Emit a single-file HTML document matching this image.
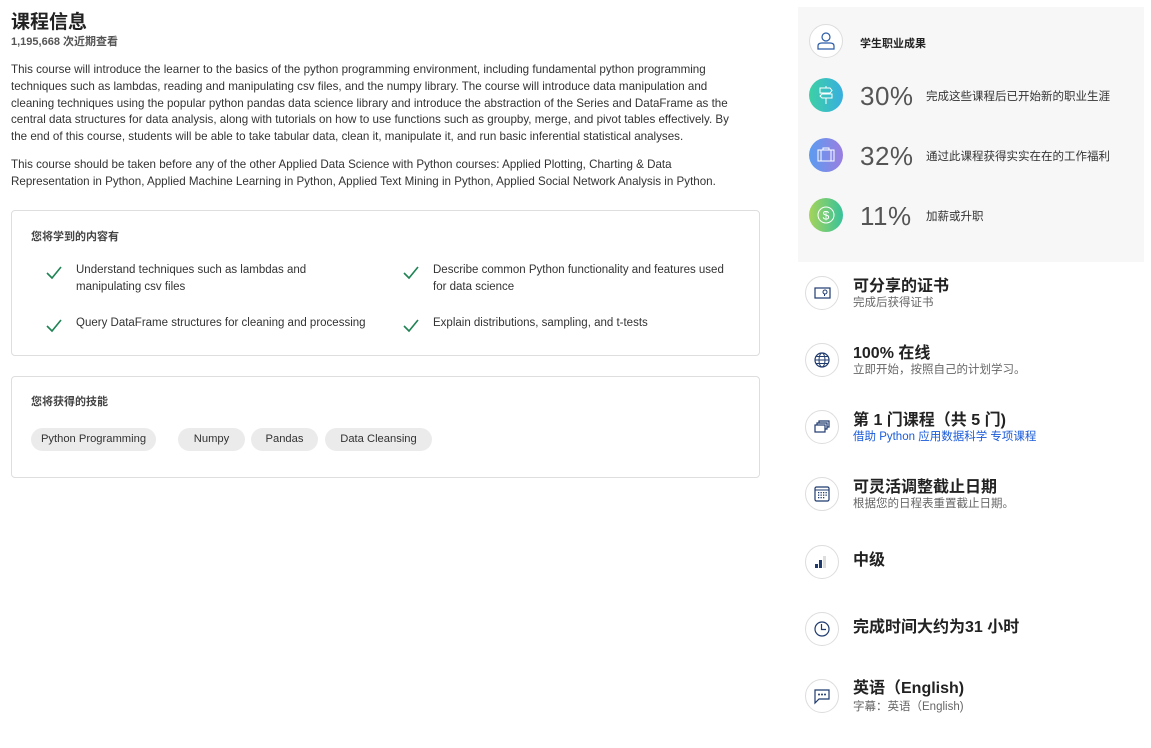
<!DOCTYPE html>
<html><head><meta charset="utf-8"><style>
*{margin:0;padding:0;box-sizing:border-box}
body{width:1151px;height:748px;background:#fff;position:relative;font-family:"Liberation Sans","Noto Sans CJK SC",sans-serif;color:#333;overflow:hidden}
.a{position:absolute;white-space:nowrap}
.p{font-size:11.6px;color:#333;line-height:16.8px}
.box{position:absolute;border:1px solid #dedede;border-radius:4px;left:11px;width:749px}
.h{font-size:11px;font-weight:bold;color:#444}
.li{font-size:11.5px;color:#333;line-height:17px}
.chip{position:absolute;top:428px;height:23px;border-radius:12px;background:#ebebeb;font-size:11.2px;color:#333;line-height:23px;text-align:center}
.circ{position:absolute;width:34px;height:34px;border-radius:50%}
.ring{border:1px solid #ddd;background:#fff}
.pct{font-size:26px;color:#555;font-weight:normal;letter-spacing:0.5px}
.st{font-size:11.5px;color:#333}
.t1{font-size:16px;font-weight:bold;color:#222;line-height:18px}
.t2{font-size:11.5px;color:#666;line-height:14px}
svg{position:absolute}
</style></head><body>
<div class="a" style="left:11px;top:7px;font-size:19px;font-weight:bold;color:#222">课程信息</div>
<div class="a" style="left:11px;top:33px;font-size:11px;font-weight:bold;color:#555">1,195,668 次近期查看</div>
<div class="a p" style="left:11px;top:62px">This course will introduce the learner to the basics of the python programming environment, including fundamental python programming<br>techniques such as lambdas, reading and manipulating csv files, and the numpy library. The course will introduce data manipulation and<br>cleaning techniques using the popular python pandas data science library and introduce the abstraction of the Series and DataFrame as the<br>central data structures for data analysis, along with tutorials on how to use functions such as groupby, merge, and pivot tables effectively. By<br>the end of this course, students will be able to take tabular data, clean it, manipulate it, and run basic inferential statistical analyses.</div>
<div class="a p" style="left:11px;top:157px">This course should be taken before any of the other Applied Data Science with Python courses: Applied Plotting, Charting &amp; Data<br>Representation in Python, Applied Machine Learning in Python, Applied Text Mining in Python, Applied Social Network Analysis in Python.</div>

<div class="box" style="top:210px;height:146px"></div>
<div class="a h" style="left:31px;top:228px">您将学到的内容有</div>
<svg style="left:46px;top:266px" width="16" height="14"><path d="M1 7 L6 12 L15 1" fill="none" stroke="#1f8354" stroke-width="1.6"/></svg>
<svg style="left:46px;top:319px" width="16" height="14"><path d="M1 7 L6 12 L15 1" fill="none" stroke="#1f8354" stroke-width="1.6"/></svg>
<svg style="left:403px;top:266px" width="16" height="14"><path d="M1 7 L6 12 L15 1" fill="none" stroke="#1f8354" stroke-width="1.6"/></svg>
<svg style="left:403px;top:319px" width="16" height="14"><path d="M1 7 L6 12 L15 1" fill="none" stroke="#1f8354" stroke-width="1.6"/></svg>
<div class="a li" style="left:76px;top:262px">Understand techniques such as lambdas and<br>manipulating csv files</div>
<div class="a li" style="left:433px;top:262px">Describe common Python functionality and features used<br>for data science</div>
<div class="a li" style="left:76px;top:315px">Query DataFrame structures for cleaning and processing</div>
<div class="a li" style="left:433px;top:315px">Explain distributions, sampling, and t-tests</div>

<div class="box" style="top:376px;height:102px"></div>
<div class="a h" style="left:31px;top:393px">您将获得的技能</div>
<div class="chip" style="left:31px;width:125px">Python Programming</div>
<div class="chip" style="left:178px;width:67px">Numpy</div>
<div class="chip" style="left:251px;width:67px">Pandas</div>
<div class="chip" style="left:325px;width:107px">Data Cleansing</div>

<div style="position:absolute;left:798px;top:7px;width:346px;height:255px;background:#f7f7f7"></div>
<div class="circ ring" style="left:809px;top:24px"></div>
<svg style="left:816px;top:31px" width="20" height="20"><circle cx="10" cy="6" r="4" fill="none" stroke="#2a5aa8" stroke-width="1.2"/><path d="M2 18 V15 Q2 12 6 12 H14 Q18 12 18 15 V18 Z" fill="none" stroke="#2a5aa8" stroke-width="1.2"/></svg>
<div class="a" style="left:860px;top:35px;font-size:11px;font-weight:bold;color:#222">学生职业成果</div>

<div class="circ" style="left:809px;top:78px;background:linear-gradient(90deg,#3dd1a4,#38aee0)"></div>
<svg style="left:816px;top:85px" width="20" height="20"><path d="M4 3 H14 L16 5.5 L14 8 H4 Z M6 9 H16 V13 H6 L4 11 Z M10 13 V19 M10 1 V3" fill="none" stroke="#fff" stroke-width="1"/></svg>
<div class="a pct" style="left:860px;top:81px">30%</div>
<div class="a st" style="left:926px;top:88px">完成这些课程后已开始新的职业生涯</div>

<div class="circ" style="left:809px;top:138px;background:linear-gradient(90deg,#5b9cf0,#9b7ee0)"></div>
<svg style="left:816px;top:145px" width="20" height="20"><rect x="2" y="5" width="16" height="11" fill="none" stroke="#fff" stroke-width="1"/><path d="M7 5 V3 H13 V5 M5 5 V16 M15 5 V16" fill="none" stroke="#fff" stroke-width="1"/></svg>
<div class="a pct" style="left:860px;top:141px">32%</div>
<div class="a st" style="left:926px;top:148px">通过此课程获得实实在在的工作福利</div>

<div class="circ" style="left:809px;top:198px;background:linear-gradient(90deg,#a6d45a,#37c29b)"></div>
<svg style="left:816px;top:205px" width="20" height="20"><circle cx="10" cy="10" r="8" fill="none" stroke="#fff" stroke-width="1"/><text x="10" y="14.5" font-size="12" fill="#fff" text-anchor="middle" font-family="Liberation Sans">$</text></svg>
<div class="a pct" style="left:860px;top:201px">11%</div>
<div class="a st" style="left:926px;top:208px">加薪或升职</div>

<div class="circ ring" style="left:805px;top:276px"></div>
<svg style="left:812px;top:283px" width="20" height="20"><rect x="3" y="5" width="15" height="10" fill="none" stroke="#1f3a6e" stroke-width="1.2"/><circle cx="13" cy="9" r="2" fill="none" stroke="#1f3a6e"/><path d="M12.5 11 V13 M3 15 H18" stroke="#1f3a6e"/></svg>
<div class="a t1" style="left:853px;top:278px">可分享的证书</div>
<div class="a t2" style="left:853px;top:296px">完成后获得证书</div>

<div class="circ ring" style="left:805px;top:343px"></div>
<svg style="left:812px;top:350px" width="20" height="20"><circle cx="10" cy="10" r="7" fill="none" stroke="#1f3a6e" stroke-width="1.2"/><ellipse cx="10" cy="10" rx="3" ry="7" fill="none" stroke="#1f3a6e"/><path d="M3 10 H17 M4 6.5 H16 M4 13.5 H16" stroke="#1f3a6e"/></svg>
<div class="a t1" style="left:853px;top:345px">100% 在线</div>
<div class="a t2" style="left:853px;top:363px">立即开始，按照自己的计划学习。</div>

<div class="circ ring" style="left:805px;top:410px"></div>
<svg style="left:812px;top:417px" width="20" height="20"><rect x="3" y="8" width="10" height="7" fill="none" stroke="#1f3a6e" stroke-width="1.2"/><path d="M5 8 V6 H15 V12 H13 M7 6 V4 H17 V10 H15" fill="none" stroke="#1f3a6e" stroke-width="1.2"/></svg>
<div class="a t1" style="left:853px;top:412px">第 1 门课程（共 5 门)</div>
<div class="a t2" style="left:853px;top:430px;color:#1a5bd8">借助 Python 应用数据科学 专项课程</div>

<div class="circ ring" style="left:805px;top:477px"></div>
<svg style="left:812px;top:484px" width="20" height="20"><rect x="3" y="3" width="14" height="14" rx="1.5" fill="none" stroke="#1f3a6e" stroke-width="1.2"/><path d="M3 6 H17" stroke="#1f3a6e"/><g fill="#1f3a6e"><rect x="6" y="8" width="1.3" height="1.3"/><rect x="8.5" y="8" width="1.3" height="1.3"/><rect x="11" y="8" width="1.3" height="1.3"/><rect x="13.5" y="8" width="1.3" height="1.3"/><rect x="6" y="10.5" width="1.3" height="1.3"/><rect x="8.5" y="10.5" width="1.3" height="1.3"/><rect x="11" y="10.5" width="1.3" height="1.3"/><rect x="13.5" y="10.5" width="1.3" height="1.3"/><rect x="6" y="13" width="1.3" height="1.3"/><rect x="8.5" y="13" width="1.3" height="1.3"/><rect x="11" y="13" width="1.3" height="1.3"/></g></svg>
<div class="a t1" style="left:853px;top:479px">可灵活调整截止日期</div>
<div class="a t2" style="left:853px;top:497px">根据您的日程表重置截止日期。</div>

<div class="circ ring" style="left:805px;top:545px"></div>
<svg style="left:812px;top:552px" width="20" height="20"><rect x="3" y="12" width="3" height="4" fill="#1f3a6e"/><rect x="7" y="8" width="3" height="8" fill="#1f3a6e"/><rect x="11" y="4" width="3" height="12" fill="#ddd"/></svg>
<div class="a t1" style="left:853px;top:552px">中级</div>

<div class="circ ring" style="left:805px;top:612px"></div>
<svg style="left:812px;top:619px" width="20" height="20"><circle cx="10" cy="10" r="7" fill="none" stroke="#1f3a6e" stroke-width="1.2"/><path d="M9.5 5 V10.5 H14" fill="none" stroke="#1f3a6e" stroke-width="1.2"/></svg>
<div class="a t1" style="left:853px;top:619px">完成时间大约为31 小时</div>

<div class="circ ring" style="left:805px;top:679px"></div>
<svg style="left:812px;top:686px" width="20" height="20"><path d="M3 4 H17 V13 H7 L3 17 Z" fill="none" stroke="#1f3a6e" stroke-width="1.2"/><g fill="#1f3a6e"><circle cx="7" cy="8.5" r="1"/><circle cx="10" cy="8.5" r="1"/><circle cx="13" cy="8.5" r="1"/></g></svg>
<div class="a t1" style="left:853px;top:680px">英语（English)</div>
<div class="a t2" style="left:853px;top:700px">字幕：英语（English)</div>
</body></html>
